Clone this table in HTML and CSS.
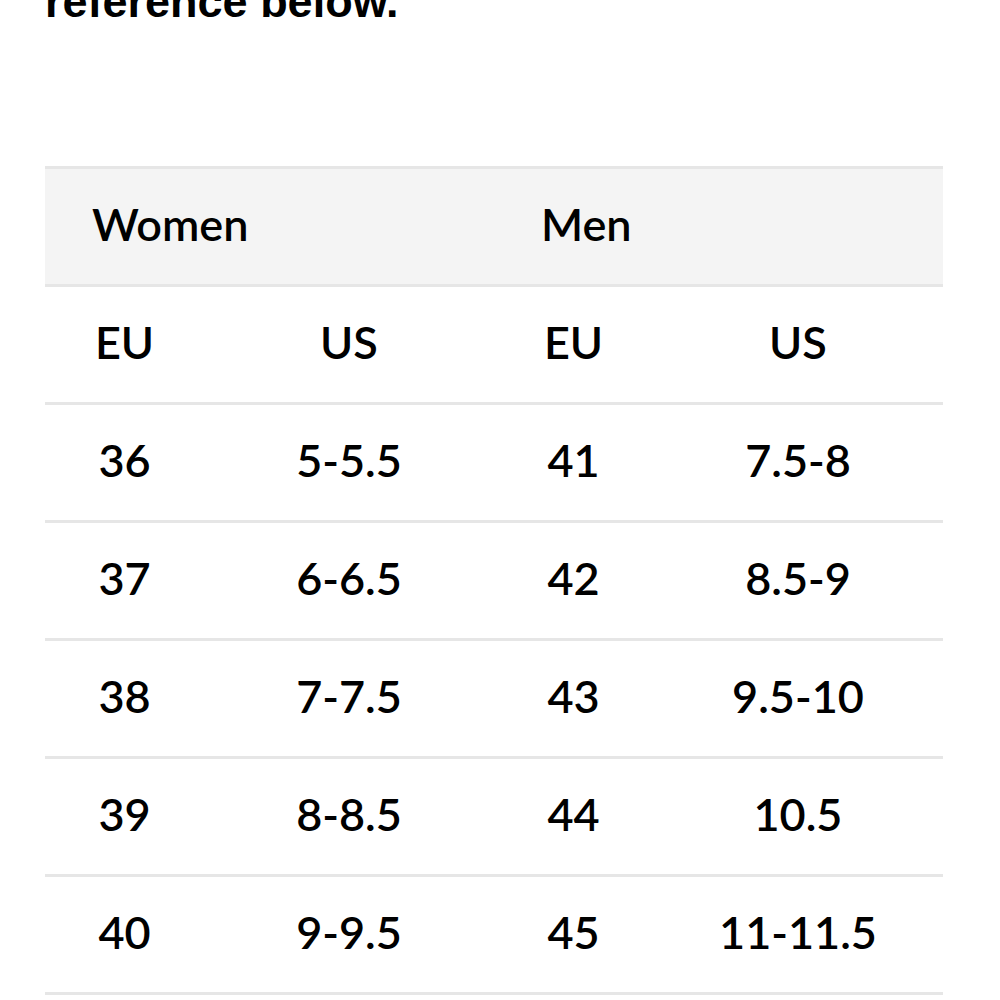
FILE: index.html
```html
<!DOCTYPE html>
<html lang="en">
<head>
<meta charset="utf-8">
<title>Size chart</title>
<link rel="stylesheet" href="styles.css">
</head>
<body>
<main class="page">
  <p class="intro">reference below.</p>
  <div class="chart">
    <div class="row head">
      <div class="group">Women</div>
      <div class="group">Men</div>
    </div>
    <div class="row">
      <div class="cell">EU</div><div class="cell">US</div><div class="cell">EU</div><div class="cell">US</div>
    </div>
    <div class="row">
      <div class="cell">36</div><div class="cell">5-5.5</div><div class="cell">41</div><div class="cell">7.5-8</div>
    </div>
    <div class="row">
      <div class="cell">37</div><div class="cell">6-6.5</div><div class="cell">42</div><div class="cell">8.5-9</div>
    </div>
    <div class="row">
      <div class="cell">38</div><div class="cell">7-7.5</div><div class="cell">43</div><div class="cell">9.5-10</div>
    </div>
    <div class="row">
      <div class="cell">39</div><div class="cell">8-8.5</div><div class="cell">44</div><div class="cell">10.5</div>
    </div>
    <div class="row">
      <div class="cell">40</div><div class="cell">9-9.5</div><div class="cell">45</div><div class="cell">11-11.5</div>
    </div>
  </div>
</main>
</body>
</html>
```
FILE: styles.css
```css
html, body {
  margin: 0;
  padding: 0;
  background: #ffffff;
}
.page {
  padding: 0 57px 0 45px;
  color: #000;
}
.intro {
  margin: -24px 0 138px;
  font-family: "Liberation Sans", Arial, sans-serif;
  font-weight: bold;
  font-size: 45px;
  line-height: 52px;
}
.chart {
  border-top: 3px solid #e6e6e6;
  font-family: Lato, "Noto Sans", sans-serif;
  font-weight: 600;
  font-size: 45px;
}
.row {
  display: grid;
  grid-template-columns: 159px 290px 159px 290px;
  box-sizing: border-box;
  height: 118px;
  padding-bottom: 5px;
  align-items: center;
  border-bottom: 3px solid #e6e6e6;
}
.head {
  background: #f4f4f4;
  grid-template-columns: 449px 449px;
}
.group {
  padding-left: 47px;
}
.cell {
  text-align: center;
}
```
